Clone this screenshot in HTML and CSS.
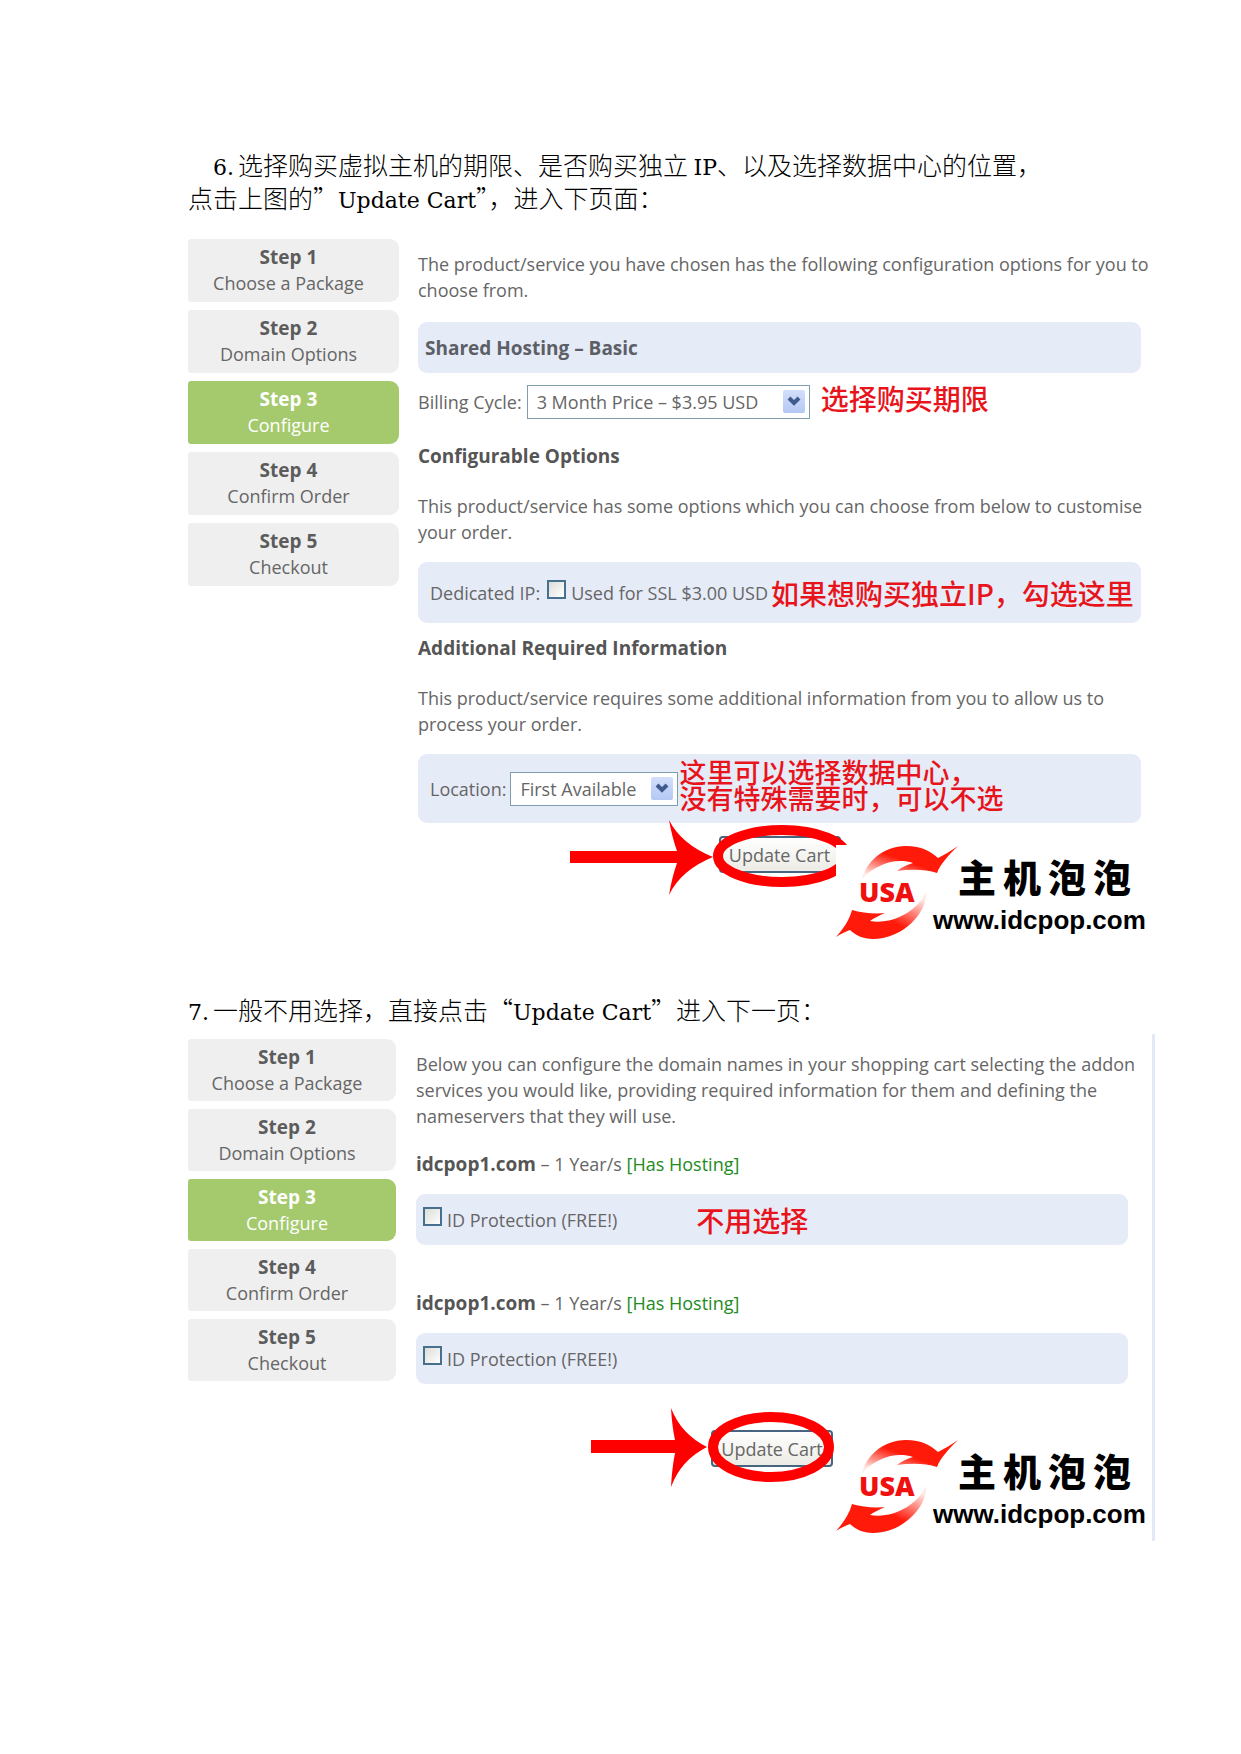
FILE: index.html
```html
<!DOCTYPE html>
<html lang="zh-CN">
<head>
<meta charset="utf-8">
<title>虚拟主机购买步骤</title>
<link rel="stylesheet" href="styles.css">
</head>
<body>
<svg class="defs" width="0" height="0" aria-hidden="true">
  <defs>
    <linearGradient id="fadeTop" x1="0" y1="1" x2="1" y2="0">
      <stop offset="0.1" stop-color="#ffe9e5"/><stop offset="0.5" stop-color="#ff1a0a"/>
    </linearGradient>
    <linearGradient id="fadeBottom" x1="1" y1="0" x2="0" y2="1">
      <stop offset="0.1" stop-color="#ffe9e5"/><stop offset="0.5" stop-color="#ff1a0a"/>
    </linearGradient>
    <symbol id="swirl" viewBox="0 0 122 95">
      <path fill="url(#fadeTop)" d="M26 34C30 18 46 1 70 1C86 1 94 6 102 13C108 10 115 6 122 1C113 10 105 18 101 28C89 24 75 24 61 26C66 22 71 20 77 18C58 12 38 21 26 34Z"/>
      <path fill="url(#fadeBottom)" d="M90 47C92 66 68 94 37 94C27 94 19 90 14 85C9 87 4 89 0 92C7 84 13 76 16 65C26 68 38 69 49 68C44 70 38 73 34 76C56 80 82 66 90 47Z"/>
    </symbol>
    <symbol id="chevron" viewBox="0 0 22 23">
      <path d="M6 8L11 13L16 8" fill="none" stroke="#3f5a8c" stroke-width="4"/>
    </symbol>
  </defs>
</svg>
<main class="doc">
  <p class="caption indented"><span class="num">6.</span>选择购买虚拟主机的期限、是否购买独立 <span class="latin">IP</span>、以及选择数据中心的位置，<br>点击上图的”<span class="latin">Update Cart</span>”，进入下页面：</p>

  <section class="shot first">
    <ol class="steps">
      <li><strong>Step 1</strong>Choose a Package</li>
      <li><strong>Step 2</strong>Domain Options</li>
      <li class="current"><strong>Step 3</strong>Configure</li>
      <li><strong>Step 4</strong>Confirm Order</li>
      <li><strong>Step 5</strong>Checkout</li>
    </ol>
    <form class="content">
      <p>The product/service you have chosen has the following configuration options for you to choose from.</p>
      <div class="panel title">Shared Hosting – Basic</div>
      <div class="row">
        <label for="cycle">Billing Cycle:</label>
        <span class="select wide"><select id="cycle"><option>3 Month Price – $3.95 USD</option></select><svg><use href="#chevron"/></svg></span>
        <span class="note spaced">选择购买期限</span>
      </div>
      <h2>Configurable Options</h2>
      <p>This product/service has some options which you can choose from below to customise your order.</p>
      <div class="panel option">
        <span>Dedicated IP:</span>
        <input type="checkbox" id="ssl"><label for="ssl">Used for SSL $3.00 USD</label>
        <span class="note">如果想购买独立IP，勾选这里</span>
      </div>
      <h2 class="near">Additional Required Information</h2>
      <p>This product/service requires some additional information from you to allow us to process your order.</p>
      <div class="panel location">
        <label for="location">Location:</label>
        <span class="select"><select id="location"><option>First Available</option></select><svg><use href="#chevron"/></svg></span>
        <span class="note">这里可以选择数据中心，<br>没有特殊需要时，可以不选</span>
      </div>
      <div class="actions">
        <button type="button">Update Cart</button>
        <svg class="mark" width="290" height="80" viewBox="0 0 290 80" aria-hidden="true">
          <path fill="#f00" d="M5 31H112Q107 17 104 0Q116 24 148 37Q116 50 104 75Q107 57 112 43H5Z"/>
          <ellipse cx="217" cy="36" rx="64" ry="26" fill="none" stroke="#f00" stroke-width="10"/>
        </svg>
      </div>
    </form>
    <div class="logo">
      <svg width="122" height="95" aria-hidden="true"><use href="#swirl"/></svg>
      <span class="usa">USA</span>
      <span class="brand"><b>主</b><b>机</b><b>泡</b><b>泡</b></span>
      <span class="site">www.idcpop.com</span>
    </div>
  </section>

  <p class="caption second-caption"><span class="num">7.</span>一般不用选择，直接点击“<span class="latin">Update Cart</span>”进入下一页：</p>

  <section class="shot second">
    <ol class="steps">
      <li><strong>Step 1</strong>Choose a Package</li>
      <li><strong>Step 2</strong>Domain Options</li>
      <li class="current"><strong>Step 3</strong>Configure</li>
      <li><strong>Step 4</strong>Confirm Order</li>
      <li><strong>Step 5</strong>Checkout</li>
    </ol>
    <form class="content">
      <p>Below you can configure the domain names in your shopping cart selecting the addon services you would like, providing required information for them and defining the nameservers that they will use.</p>
      <h3><strong>idcpop1.com</strong> – 1 Year/s <em>[Has Hosting]</em></h3>
      <div class="panel addon">
        <input type="checkbox" id="idp1"><label for="idp1">ID Protection (FREE!)</label>
        <span class="note far">不用选择</span>
      </div>
      <h3 class="later"><strong>idcpop1.com</strong> – 1 Year/s <em>[Has Hosting]</em></h3>
      <div class="panel addon">
        <input type="checkbox" id="idp2"><label for="idp2">ID Protection (FREE!)</label>
      </div>
      <div class="actions">
        <button type="button">Update Cart</button>
        <svg class="mark" width="290" height="84" viewBox="0 0 290 84" aria-hidden="true">
          <path fill="#f00" d="M34 34H118Q115 20 114 2Q124 28 150 41Q124 54 114 81Q115 62 118 47H34Z"/>
          <ellipse cx="214" cy="41" rx="58" ry="30" fill="none" stroke="#f00" stroke-width="10"/>
        </svg>
      </div>
    </form>
    <div class="logo">
      <svg width="122" height="95" aria-hidden="true"><use href="#swirl"/></svg>
      <span class="usa">USA</span>
      <span class="brand"><b>主</b><b>机</b><b>泡</b><b>泡</b></span>
      <span class="site">www.idcpop.com</span>
    </div>
  </section>
</main>
</body>
</html>
```

FILE: styles.css
```css
* { box-sizing: border-box; }

body {
  margin: 0;
  background: #fff;
  color: #666;
  font: 18px/26px "Open Sans", "Noto Sans CJK SC", sans-serif;
}

p, h2, h3, ol { margin: 0; padding: 0; }

.defs { position: absolute; }

.doc { padding: 148px 86px 200px 188px; }

/* captions between the screens */
.caption {
  color: #000;
  font: 300 25px/33px "Noto Sans CJK SC", sans-serif;
}
.caption.indented { text-indent: 25px; }
.caption.second-caption { margin-top: 53px; }
.latin, .num { font: 22px/22px "DejaVu Serif", serif; }
.num { display: inline-block; width: 25px; text-indent: 0; }

/* one order screen */
.shot {
  position: relative;
  display: flex;
  align-items: flex-start;
}
.shot.first {
  margin-top: 17px;
  padding: 8px 14px 67px 0;
  gap: 19px;
}
.shot.second {
  margin-top: 8px;
  padding: 5px 24px 74px 0;
  gap: 20px;
  border-right: 3px solid #e3e9f7;
}

.steps {
  flex: none;
  width: 211px;
  display: grid;
  gap: 8px;
  list-style: none;
  text-align: center;
}
.second .steps { width: 208px; }
.steps li {
  padding: 5px 10px 6px 0;
  border-radius: 3px 9px 9px 3px;
  background: #efefef;
}
.second .steps li { padding: 5px 10px 5px 0; }
.steps strong { display: block; font-size: 19px; color: #5c5c5c; }
.steps .current, .steps .current strong { background: #a5ca6e; color: #fff; }

.content { flex: 1; min-width: 0; padding-top: 12px; }
.content p { margin-right: -12px; }
h2 { margin: 24px 0; font-size: 19px; line-height: 26px; color: #555; }
h2.near { margin-top: 12px; }
h3 { margin-top: 22px; font-size: 18px; line-height: 26px; font-weight: 400; }
h3.later { margin-top: 45px; }
h3 strong { font-size: 19px; color: #555; }
h3 em { font-style: normal; color: #228b22; }

.panel {
  display: flex;
  align-items: center;
  margin-top: 17px;
  height: 51px;
  border-radius: 9px;
  background: #e6ebf8;
  white-space: nowrap;
}
.panel.title { margin-top: 19px; padding-left: 7px; font-size: 19px; font-weight: 700; color: #5c5f66; }
.panel.option { height: 61px; padding-left: 12px; }
.panel.location { height: 69px; padding-left: 12px; gap: 4px; }
.panel.addon { padding-left: 7px; }

.row { display: flex; align-items: center; gap: 5px; margin-top: 12px; white-space: nowrap; }

input[type="checkbox"] {
  appearance: none;
  flex: none;
  width: 19px;
  height: 19px;
  margin: 0 5px 6px 7px;
  border: 2px solid #47708f;
  background: linear-gradient(135deg, #dcdcd7, #fff);
}
.addon input[type="checkbox"] { margin-left: 0; }

.select { position: relative; width: 168px; height: 34px; }
.select.wide { width: 283px; }
select {
  appearance: none;
  width: 100%;
  height: 100%;
  padding: 0 9px;
  border: 1px solid #7f9db0;
  border-radius: 0;
  background: #fff;
  color: #666;
  font: inherit;
}
.select svg {
  position: absolute;
  top: 5px;
  right: 5px;
  width: 22px;
  height: 23px;
  border-radius: 2px;
  background: linear-gradient(#d3dffb, #b4c8f4);
  pointer-events: none;
}

.note {
  color: #e8141c;
  font: 500 28px/26px "Noto Sans CJK SC", sans-serif;
  white-space: nowrap;
}
.option .note { margin-left: 3px; }
.location .note { margin: 0 0 8px -3px; font-size: 27px; }
.note.spaced { margin: 0 0 8px 6px; }
.note.far { margin-left: 79px; }

.actions { position: relative; width: 122px; margin: 13px auto 0; }
.second .actions { margin-top: 46px; }
button {
  display: block;
  width: 100%;
  height: 37px;
  padding: 0;
  border: 2px solid #47657f;
  border-radius: 4px;
  background: linear-gradient(#fff, #ecebe5);
  color: #666;
  font: inherit;
  white-space: nowrap;
}
.mark { position: absolute; top: -16px; left: -154px; pointer-events: none; }
.second .mark { top: -24px; }

/* site logo laid over the screen's corner */
.logo {
  position: absolute;
  right: 9px;
  bottom: 0;
  width: 310px;
  height: 95px;
  background: #fff;
}
.second .logo { right: 6px; bottom: 7px; }
.logo svg { display: block; }
.usa {
  position: absolute;
  left: 23px;
  top: 32px;
  color: #f01010;
  font: 800 27px/30px "Open Sans", sans-serif;
}
.brand {
  position: absolute;
  left: 122px;
  top: 12px;
  display: flex;
  gap: 7px;
  color: #000;
  font: 900 38px/38px "Noto Sans CJK SC", sans-serif;
}
.site {
  position: absolute;
  left: 97px;
  top: 60px;
  color: #000;
  font: 700 26px/30px "Liberation Sans", sans-serif;
}
```
